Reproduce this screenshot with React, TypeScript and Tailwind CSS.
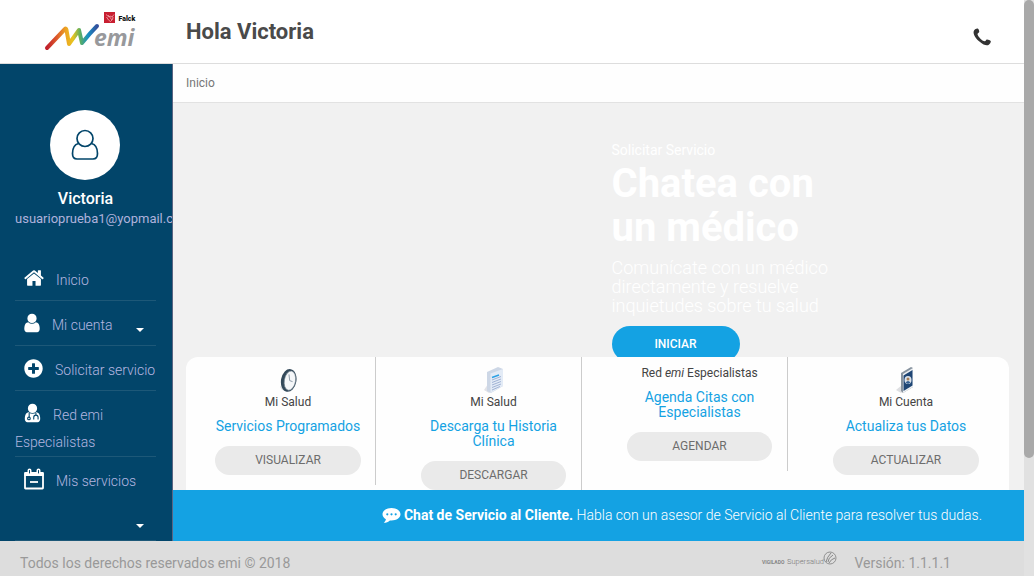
import type { ReactNode } from "react";
import { FaPlusCircle } from "react-icons/fa";

function Logo() {
  return (
    <svg width="94" height="42" viewBox="0 0 94 42" role="img" aria-label="Falck emi">
      <defs>
        <linearGradient id="wave" x1="0" x2="1" y1="0" y2="0">
          <stop offset="0" stopColor="#c0202c" />
          <stop offset="0.2" stopColor="#dd5a2a" />
          <stop offset="0.38" stopColor="#eda523" />
          <stop offset="0.52" stopColor="#e8c51f" />
          <stop offset="0.66" stopColor="#5fb060" />
          <stop offset="0.82" stopColor="#1690c4" />
          <stop offset="1" stopColor="#344f9c" />
        </linearGradient>
      </defs>
      <path
        d="M3 37 L21 18 Q22 17 22.500 19 L25 33 L35 19 L38 32 Q46 22 53 15"
        fill="none"
        stroke="url(#wave)"
        strokeWidth="4"
        strokeLinecap="round"
        strokeLinejoin="round"
      />
      <rect x="60" y="1" width="11" height="11" fill="#c81f31" />
      <path d="M62 3.500l3 2.500 1-1 2 1 2-2.500M62.500 6l2 3 2 1.500 2-2 .5-2.500M64 4l4 5" fill="none" stroke="#f3a9ae" strokeWidth="0.8" />
      <text x="74.500" y="10" fontFamily="Roboto, sans-serif" fontWeight="900" fontSize="7" fill="#111">
        Falck
      </text>
      <text x="50" y="35" fontFamily="'Open Sans', 'Noto Sans', sans-serif" fontWeight="700" fontStyle="italic" fontSize="23" fill="#98999c">
        emi
      </text>
    </svg>
  );
}

function PhoneIcon() {
  return (
    <svg width="18" height="18" viewBox="0 0 18 18" fill="#333" aria-hidden="true">
      <path d="M1.200 2.300C2.200.8 3.800.1 4.700.5c1 .5 1.700 2.600 1.500 3.500-.2.8-1.600 1.100-1.700 1.900-.1 1.300 1.400 3.200 2.700 4.500s3.300 2.800 4.700 2.800c.8 0 1.100-1.600 2-1.700 1-.1 3.300.7 3.800 1.500.5 1-.6 2.900-1.900 3.800-1.900 1.300-5.500.2-9.100-3C2.500 10.200-.9 5.300 1.200 2.300z" />
    </svg>
  );
}

function AvatarIcon() {
  return (
    <svg width="28" height="32" viewBox="0 0 28 32" fill="none" stroke="#02456a" strokeWidth="1.7" aria-hidden="true">
      <circle cx="14" cy="9.500" r="8" />
      <path d="M7.500 14.500C3.500 15.500 1.500 19.500 1.500 24.500c0 4 1.500 5.500 4.500 5.500h16c3 0 4.500-1.500 4.500-5.500 0-5-2-9-6-10" />
    </svg>
  );
}

function HomeIcon() {
  return (
    <svg width="20" height="20" viewBox="64 64 1664 1664" fill="currentColor" aria-hidden="true">
      <path d="M1472 992v480q0 26-19 45t-45 19h-384v-384h-256v384h-384q-26 0-45-19t-19-45v-480q0-1 .5-3t.5-3l575-474 575 474q1 2 1 6zm223-69l-62 74q-8 9-21 11h-3q-13 0-21-7l-692-577-692 577q-12 8-24 7-13-2-21-11l-62-74q-8-10-7-23.500t11-21.500l719-599q32-26 76-26t76 26l244 204v-195q0-14 9-23t23-9h192q14 0 23 9t9 23v408l219 182q10 8 11 21.500t-7 23.500z" />
    </svg>
  );
}

const bodyPath =
  "M1536 1399q0 109-62.500 187t-150.500 78h-854q-88 0-150.500-78t-62.500-187q0-85 8.500-160.500t31.500-152 58.500-131 94-89 134.500-34.500q131 128 313 128t313-128q76 0 134.500 34.500t94 89 58.500 131 31.500 152 8.500 160.500zm-256-887q0 159-112.500 271.500t-271.500 112.500-271.500-112.500-112.500-271.500 112.500-271.500 271.500-112.500 271.500 112.500 112.500 271.500z";

function UserIcon() {
  return (
    <svg width="16" height="20" viewBox="256 64 1280 1664" fill="currentColor" aria-hidden="true">
      <path d={bodyPath} />
    </svg>
  );
}

function DoctorIcon() {
  return (
    <svg width="17" height="20" viewBox="216 64 1360 1664" fill="currentColor" aria-hidden="true">
      <path d={bodyPath} />
      <g fill="none" stroke="#02456a" strokeWidth="90">
        <path d="M620 900v340M1180 900v130M1000 1440v-190q0-180 180-180t180 180v190" />
        <circle cx="600" cy="1350" r="110" />
      </g>
    </svg>
  );
}

function CalendarIcon() {
  return (
    <svg width="20" height="22" viewBox="0 0 20 22" fill="none" stroke="currentColor" aria-hidden="true">
      <rect x="1" y="5" width="18" height="15.500" rx="0.500" strokeWidth="1.800" />
      <path d="M0.500 4.500h19v3.500h-19z" fill="currentColor" stroke="none" />
      <path d="M5.500 6V2.500M14.500 6V2.500" strokeWidth="4" strokeLinecap="round" />
      <path d="M5.500 5V2.500M14.500 5V2.500" stroke="#02456a" strokeWidth="1" strokeLinecap="round" />
      <path d="M6 14h8" strokeWidth="1.800" />
    </svg>
  );
}

function ChatIcon() {
  return (
    <svg width="19" height="17" viewBox="0 0 19 17" aria-hidden="true">
      <path d="M9.500 1C4.500 1 .5 3.800.5 7.300c0 2.100 1.300 3.800 3.400 5-.2 1.300-.9 2.400-2.200 3.500 2.500-.1 4.700-1 6.200-2.400.5.1 1 .1 1.600.1 5 0 9-2.700 9-6.200S14.500 1 9.500 1z" fill="#fff" />
      <g fill="#14a2e3">
        <circle cx="5.300" cy="7.300" r="1.100" />
        <circle cx="9.500" cy="7.300" r="1.100" />
        <circle cx="13.700" cy="7.300" r="1.100" />
      </g>
    </svg>
  );
}

function ClockArt() {
  return (
    <svg width="20" height="29" viewBox="0 0 20 29" aria-hidden="true">
      <path d="M2 22l4-5 6 9-8-1z" fill="#dfe1e4" />
      <g transform="rotate(10 11 15)">
        <ellipse cx="10.800" cy="15.500" rx="7.700" ry="11.500" fill="#33495a" />
        <ellipse cx="12" cy="15.500" rx="5.600" ry="9.700" fill="#f5f7f9" stroke="#6c7d89" strokeWidth="0.600" />
        <path d="M10 9.500l1.800 6 3 .5" fill="none" stroke="#8a98a5" strokeWidth="0.900" />
      </g>
    </svg>
  );
}

function DocumentArt() {
  return (
    <svg width="20" height="29" viewBox="0 0 20 29" aria-hidden="true">
      <path d="M0 25l4-6 3 8-2 1z" fill="#e2e3e8" />
      <path d="M3 7L14 2l5 2v17L7 28l-4-2z" fill="#cdd7e6" />
      <path d="M6.500 8.500L19 4v17L6.500 28z" fill="#e3ebf6" />
      <path d="M8 12.500l7-2.500" stroke="#2ba0e4" strokeWidth="1.400" />
      <path d="M8 15l9-3.500M8 17.500l9-3.500M8 20l9-3.500M8 22.500l9-3.500M8 25l8-3.500" stroke="#8fa4cb" strokeWidth="0.800" />
    </svg>
  );
}

function PhoneArt() {
  return (
    <svg width="20" height="29" viewBox="0 0 20 29" aria-hidden="true">
      <path d="M0 25l6-5 4 5-5 3z" fill="#dedfe2" />
      <path d="M5 8L15 2l2 1v19L7 28l-2-2z" fill="#87939f" />
      <path d="M7 9l10-6v19L7 28z" fill="#eef1f4" />
      <path d="M7.500 10.500L16.500 5v15.500l-9 5.500z" fill="#1f4675" />
      <ellipse cx="12" cy="15" rx="3.500" ry="4" fill="#dce3ec" />
      <circle cx="12" cy="14" r="1.500" fill="#a47d55" />
      <path d="M9.500 17.500q2.500-3 5 0l-2.500 1.500z" fill="#335f92" />
    </svg>
  );
}

function Supersalud() {
  return (
    <svg width="78" height="18" viewBox="0 0 78 18" role="img" aria-label="Vigilado Supersalud">
      <text x="2" y="15" fontFamily="Roboto, sans-serif" fontWeight="700" fontSize="5" fill="#858585">VIGILADO</text>
      <text x="27" y="15" fontFamily="Roboto, sans-serif" fontWeight="300" fontSize="7.500" fill="#777">Supersalud</text>
      <circle cx="70" cy="9" r="6" fill="none" stroke="#888" strokeWidth="0.900" />
      <path d="M66 13q1-5 5-9M68 13q0-4 5-7M69 14q2-4 6-5" fill="none" stroke="#888" strokeWidth="1" />
    </svg>
  );
}

function Caret() {
  return (
    <svg width="8" height="4" viewBox="0 0 8 4" fill="#fff" aria-hidden="true">
      <path d="M0 0h8L4 4z" />
    </svg>
  );
}

function NavItem({ icon, label, menu = false, wide = false }: { icon: ReactNode; label: string; menu?: boolean; wide?: boolean }) {
  return (
    <li className="border-b border-[#1d5878]">
      <a href="#" className="flex min-h-11 flex-wrap items-start pt-[11px] leading-[27px]">
        <span className={wide ? "w-full" : ""}>
          <span className="-mt-[6px] mr-3 ml-[9px] inline-block align-middle text-white [&>svg]:block">{icon}</span>
          {label}
        </span>
        {menu && (
          <span className={wide ? "mt-[29px] mr-3 ml-auto pb-[12px] [&>svg]:block" : "mt-4 mr-3 ml-auto [&>svg]:block"}>
            <Caret />
          </span>
        )}
      </a>
    </li>
  );
}

function ServiceCard({ art, area, title, action, className }: { art?: ReactNode; area: ReactNode; title: string; action: string; className: string }) {
  return (
    <article className={`flex flex-col items-center pt-2 pb-[10px] text-center ${className}`}>
      {art}
      <p className="text-[12px] leading-[17px] text-[#444]">{area}</p>
      <h3 className="mt-2 text-[14px] leading-[15px] text-[#14a2e3]">{title}</h3>
      <button type="button" className="mt-3 h-[29px] w-full rounded-full bg-[#eaeaea] pb-px text-[12px] text-[#6d6d6d]">
        {action}
      </button>
    </article>
  );
}

export default function App() {
  return (
    <div className="flex h-screen overflow-hidden bg-[#f1f1f1] font-['Roboto','Liberation_Sans',sans-serif]">
      <div className="flex min-w-0 flex-1 flex-col">
        <header className="flex h-16 shrink-0 items-center border-b border-[#ddd] bg-white">
          <div className="flex w-[172px] shrink-0 pl-11">
            <Logo />
          </div>
          <h1 className="ml-[14px] flex-1 text-[22px] font-bold text-[#4a4a4a]">Hola Victoria</h1>
          <a href="#" aria-label="Llamar" className="mt-[10px] mr-[33px]">
            <PhoneIcon />
          </a>
        </header>

        <div className="flex min-h-0 flex-1">
          <aside className="w-[173px] shrink-0 overflow-hidden border-r border-[#5a6482] bg-[#02456a] pl-[15px]">
            <div className="flex flex-col pt-[46px]">
              <div className="ml-[35px] flex size-[70px] items-center justify-center rounded-full bg-white">
                <AvatarIcon />
              </div>
              <p className="mt-[9px] mr-4 text-center text-[16px] leading-5 font-medium text-white">Victoria</p>
              <p className="text-[13px] leading-5 whitespace-nowrap text-[#afb2dc]">usuarioprueba1@yopmail.com</p>
            </div>
            <nav className="mt-[27px] mr-4 text-[14px] font-light text-[#b4b6e0]">
              <ul>
                <NavItem icon={<HomeIcon />} label="Inicio" />
                <NavItem icon={<UserIcon />} label="Mi cuenta" menu />
                <NavItem icon={<FaPlusCircle size={19} />} label="Solicitar servicio" />
                <NavItem icon={<DoctorIcon />} label="Red emi Especialistas" />
                <NavItem icon={<CalendarIcon />} label="Mis servicios" menu wide />
              </ul>
            </nav>
          </aside>

          <div className="flex min-w-0 flex-1 flex-col">
            <div className="flex h-[39px] shrink-0 items-center border-b border-[#e2e2e2] bg-[#fefefe] pl-[13px] text-[12px] text-[#777]">
              Inicio
            </div>
            <main className="min-h-0 flex-1 overflow-hidden pr-[15px] pl-[13px]">
              <section className="grid h-[254px] grid-cols-2 overflow-hidden">
                <div className="col-start-2 pt-[37px] pl-[14px] text-white">
                  <p className="text-[14px] leading-5">Solicitar Servicio</p>
                  <h2 className="mt-[2px] max-w-[230px] text-[40px] leading-[44px] font-bold">Chatea con un médico</h2>
                  <p className="mt-2 max-w-[230px] text-[18px] leading-[19px] font-light">
                    Comunícate con un médico directamente y resuelve inquietudes sobre tu salud
                  </p>
                  <button type="button" className="mt-[11px] h-9 w-32 rounded-full bg-[#14a2e3] text-[12px] font-medium text-white">
                    INICIAR
                  </button>
                </div>
              </section>
              <section className="grid grid-cols-[190fr_206fr_206fr_221fr] items-start rounded-t-[12px] bg-[#fefefe]">
                <ServiceCard art={<ClockArt />} area="Mi Salud" title="Servicios Programados" action="VISUALIZAR" className="border-r border-[#ccc] pr-[14px] pl-[29px]" />
                <ServiceCard art={<DocumentArt />} area="Mi Salud" title="Descarga tu Historia Clínica" action="DESCARGAR" className="border-r border-[#ccc] pr-[15px] pl-[45px]" />
                <ServiceCard area={<>Red <em>emi</em> Especialistas</>} title="Agenda Citas con Especialistas" action="AGENDAR" className="border-r border-[#ccc] pr-[15px] pl-[45px]" />
                <ServiceCard art={<PhoneArt />} area="Mi Cuenta" title="Actualiza tus Datos" action="ACTUALIZAR" className="pr-[30px] pl-[45px]" />
              </section>
            </main>
            <a href="#" className="flex h-[51px] shrink-0 items-center justify-end gap-[3px] bg-[#14a2e3] pr-[42px] text-[14px] font-light text-white">
              <ChatIcon />
              <span><strong className="font-bold">Chat de Servicio al Cliente.</strong> Habla con un asesor de Servicio al Cliente para resolver tus dudas.</span>
            </a>
          </div>
        </div>

        <footer className="flex h-[35px] shrink-0 items-center bg-[#ddd] pt-[10px] pr-[73px] pl-5 text-[14px] text-[#999]">
          <p className="flex-1">Todos los derechos reservados emi © 2018</p>
          <span className="-mt-3 mr-4">
            <Supersalud />
          </span>
          <p>Versión: 1.1.1.1</p>
        </footer>
      </div>
      <div className="w-[10px] shrink-0 bg-[#e1e1e1]" aria-hidden="true">
        <div className="h-[79.5%] rounded-full bg-[#a9a9a9]" />
      </div>
    </div>
  );
}
